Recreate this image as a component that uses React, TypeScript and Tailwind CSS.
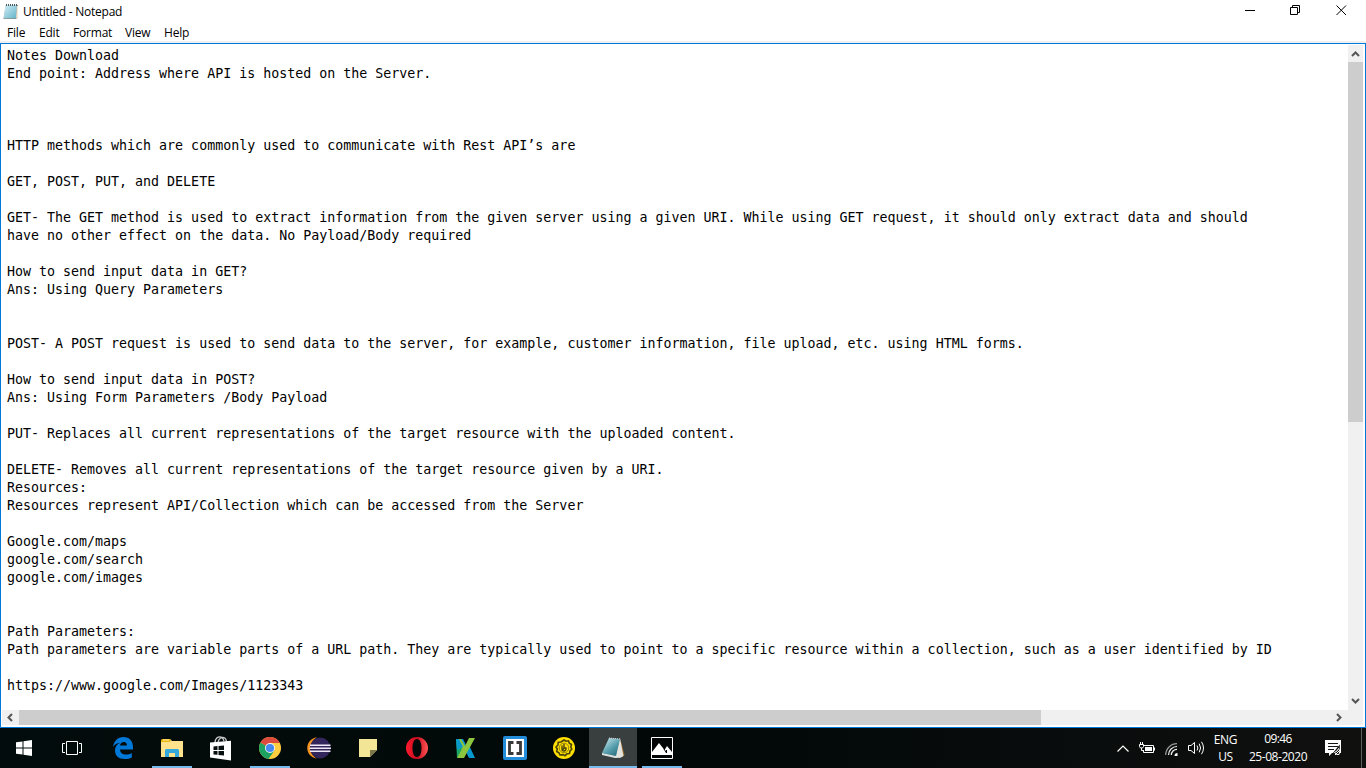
import React from "react";

const lines = [
  "Notes Download",
  "End point: Address where API is hosted on the Server.",
  "", "", "",
  "HTTP methods which are commonly used to communicate with Rest API’s are",
  "",
  "GET, POST, PUT, and DELETE",
  "",
  "GET- The GET method is used to extract information from the given server using a given URI. While using GET request, it should only extract data and should",
  "have no other effect on the data. No Payload/Body required",
  "",
  "How to send input data in GET?",
  "Ans: Using Query Parameters",
  "", "",
  "POST- A POST request is used to send data to the server, for example, customer information, file upload, etc. using HTML forms.",
  "",
  "How to send input data in POST?",
  "Ans: Using Form Parameters /Body Payload",
  "",
  "PUT- Replaces all current representations of the target resource with the uploaded content.",
  "",
  "DELETE- Removes all current representations of the target resource given by a URI.",
  "Resources:",
  "Resources represent API/Collection which can be accessed from the Server",
  "",
  "Google.com/maps",
  "google.com/search",
  "google.com/images",
  "", "",
  "Path Parameters:",
  "Path parameters are variable parts of a URL path. They are typically used to point to a specific resource within a collection, such as a user identified by ID",
  "",
  "https://www.google.com/Images/1123343",
];

const NotepadIcon = () => (
  <svg width="16" height="18" viewBox="0 0 16 18">
    <defs>
      <linearGradient id="pad" x1="0" y1="0" x2="1" y2="1">
        <stop offset="0" stopColor="#d3eff6" />
        <stop offset="1" stopColor="#62b2c8" />
      </linearGradient>
    </defs>
    <path d="M3 2H15V14L13 16H0.5Z" fill="#8b7a62" />
    <path d="M2.5 2H14L13 15.5H0.5Z" fill="url(#pad)" />
    <path d="M14 2.5L15 3V14L13 15.5Z" fill="#eee7d8" />
    <path d="M3 2H15" stroke="#4c5960" strokeWidth="2" strokeDasharray="1 1" />
  </svg>
);

const Chevron = ({ d }: { d: string }) => (
  <svg width="9" height="9" viewBox="0 0 9 9" fill="none" stroke="#555" strokeWidth="2"><path d={d} /></svg>
);

const StartIcon = () => (
  <svg width="16" height="16" viewBox="0 0 16 16" fill="#fff">
    <path d="M0 2.3L6.5 1.4V7.5H0ZM7.5 1.2L16 0V7.5H7.5ZM0 8.5H6.5V14.6L0 13.7ZM7.5 8.5H16V16L7.5 14.8Z" />
  </svg>
);
const TaskViewIcon = () => (
  <svg width="20" height="14" viewBox="0 0 20 14" fill="none" stroke="#fff">
    <path d="M4.5 .5H15.5V13.5H4.5ZM3 2.5H.5V11.5H3M17 2.5H19.5V11.5H17" />
  </svg>
);
const EdgeIcon = () => (
  <svg width="20" height="22" viewBox="0 0 20 22" fill="#0078d7">
    <path d="M0 9.8C1 4 4.8 0 10.3 0C16.4 0 20 4.2 20 9.8V12.5H7C7.2 16 9.8 17.6 13 17.6C15.3 17.6 17.2 17 18.8 16V20.4C16.8 21.5 14.4 22 11.8 22C5.6 22 2 18.5 2 13.5C2 9.9 4 7.2 7.2 5.8C4 6.1 1.6 7.6 0 9.8ZM7 8.6H14C14 6.2 12.8 5 10.7 5C8.7 5 7.4 6.4 7 8.6Z" />
  </svg>
);
const FolderIcon = () => (
  <svg width="22" height="19" viewBox="0 0 22 19">
    <path d="M0 1H1L2 0H9L11 2H22V18H0Z" fill="#ffe38c" />
    <path d="M0 1L1 0H9L10 2L8 3H0Z" fill="#e8b50e" />
    <path d="M2 1H8" stroke="#fff1ab" />
    <path d="M4 18V11L5 10H17L18 11V18H14V14H8V18Z" fill="#36a9dc" />
  </svg>
);
const StoreIcon = () => (
  <svg width="22" height="25" viewBox="0 0 22 25">
    <path d="M5 7C5 2 8 .8 10 .8C12 .8 13 2 14 5M8 6C9 2 12 .8 14 1.6C16 2.3 16.5 4 16.5 7" fill="none" stroke="#ccc" strokeWidth="1.3" />
    <path d="M0 6.5L21 4.8V24.5L0 21.5Z" fill="#fff" />
    <path d="M3.5 10.5L7.5 10.1V14H3.5ZM8.5 10L14 9.5V14H8.5ZM3.5 15H7.5V18.8L3.5 18.4ZM8.5 15H14V19.5L8.5 18.9Z" fill="#07100f" />
  </svg>
);
const ChromeIcon = () => (
  <svg width="22" height="22" viewBox="0 0 22 22">
    <circle cx="11" cy="11" r="11" fill="#ffcd40" />
    <path d="M11 11L1.5 5.5A11 11 0 0 0 9.5 21.9L15.5 13.5Z" fill="#1da261" />
    <path d="M11 11L1.5 5.5A11 11 0 0 1 20.8 6H11Z" fill="#dd4b3e" />
    <circle cx="11" cy="11" r="5" fill="#f4f4f4" />
    <circle cx="11" cy="11" r="4.1" fill="#4688f1" />
  </svg>
);
const EclipseIcon = () => (
  <svg width="24" height="22" viewBox="0 0 24 22">
    <path d="M10 .3C-3 2.5-3 19.5 10 21.7C1.5 17 1.5 5 10 .3Z" fill="#f7941e" />
    <circle cx="13.2" cy="11" r="10.4" fill="#33265d" />
    <path d="M3 8.2H23.5M2.5 11.2H24M3 14.2H23.5" stroke="#eee9f5" strokeWidth="1.6" />
  </svg>
);
const NoteIcon = () => (
  <svg width="18" height="18" viewBox="0 0 18 18">
    <path d="M0 0H18V11L11 18H0Z" fill="#f2e596" />
    <path d="M11 18V11H18Z" fill="#7b754a" />
  </svg>
);
const OperaIcon = () => (
  <svg width="22" height="22" viewBox="0 0 22 22">
    <defs><linearGradient id="opera" x2="1"><stop stopColor="#ff1b2d" /><stop offset=".5" stopColor="#c70b1e" /><stop offset="1" stopColor="#ff5655" /></linearGradient></defs>
    <path fillRule="evenodd" fill="url(#opera)" d="M11 0A11 11 0 1 0 11 22A11 11 0 1 0 11 0ZM11 2C14 2 15.5 6 15.5 11S14 20 11 20C8 20 6.5 16 6.5 11S8 2 11 2Z" />
  </svg>
);
const KatalonIcon = () => (
  <svg width="20" height="20" viewBox="0 0 20 20">
    <path d="M0 1H5L10 10L1 20Z" fill="#1aa765" />
    <path d="M0 1H7L10 7L7 11Z" fill="#0799ce" />
    <path d="M13 7L19 20H13L9 12Z" fill="#0799ce" />
    <path d="M13 0H19L8 20H1L6 11L2 1H5L9 8Z" fill="#8cc63f" />
    <path d="M0 1H3L7 9L1 12Z" fill="#0799ce" />
  </svg>
);
const BracketsIcon = () => (
  <svg width="24" height="24" viewBox="0 0 24 24">
    <rect width="24" height="24" rx="2" fill="#238dda" />
    <rect x="3" y="3" width="18" height="18" fill="#fff" />
    <path d="M10.5 6.5H6.5V17.5H10.5M13.5 6.5H17.5V17.5H13.5" fill="none" stroke="#393939" strokeWidth="2.8" />
  </svg>
);
const GearIcon = () => (
  <svg width="22" height="22" viewBox="0 0 22 22">
    <circle cx="11" cy="11" r="11" fill="#ffdf00" />
    <path d="M11 3L13 4.2L15.5 3.8L16.3 6.2L18.5 7.5L17.8 10L18.8 12.2L17 14L16.5 16.5L14 16.8L12 18.7L10 17.6L7 18L6 15.8L3.7 14.5L4.3 12L3 10L5 8L5.2 5.2L8 5Z" fill="none" stroke="#49420a" strokeWidth="1.6" />
    <circle cx="11" cy="11" r="4.8" fill="none" stroke="#776d0d" strokeWidth=".8" />
    <path d="M11 7V11M9 8.5V12Q9 14 11 14T13 11H11L9.5 13" fill="none" stroke="#49420a" strokeWidth="1.4" />
  </svg>
);
const BigNotepadIcon = () => (
  <svg width="23" height="22" viewBox="0 0 23 22">
    <defs><linearGradient id="notebook" x1="0" y1="0" x2=".8" y2="1"><stop stopColor="#d8f0f3" /><stop offset=".6" stopColor="#579fae" /><stop offset="1" stopColor="#286d7d" /></linearGradient></defs>
    <path d="M18 1L22.5 18L20 20Z" fill="#9c6b2c" />
    <path d="M18 1L21.5 19L18 21L13 20Z" fill="#e2e2df" />
    <path d="M7 1L18 2L14 19L0 16Z" fill="url(#notebook)" />
    <path d="M0 16L14 19L17 21L13 21L0 18Z" fill="#d7e1df" />
    <path d="M7 1L18 2" stroke="#ddd" strokeDasharray="1 1" />
  </svg>
);
const PhotosIcon = () => (
  <svg width="22" height="22" viewBox="0 0 22 22">
    <path d="M.5 .5H21.5V21.5H.5Z" fill="#020606" stroke="#fff" />
    <path d="M1 15L8 6L13.5 13L16 9L21 15V18H1Z" fill="#fff" />
    <path d="M13 12L15.5 16V13" fill="none" stroke="#020606" />
  </svg>
);

const tasks = [
  { Icon: StartIcon, c: "w-[48px]" },
  { Icon: TaskViewIcon, c: "w-[48px]" },
  { Icon: EdgeIcon, c: "w-[54px]" },
  { Icon: FolderIcon, c: "w-[44px]", open: true },
  { Icon: StoreIcon, c: "w-[53px]" },
  { Icon: ChromeIcon, c: "w-[45px]", open: true },
  { Icon: EclipseIcon, c: "w-[53px]" },
  { Icon: NoteIcon, c: "w-[46px]" },
  { Icon: OperaIcon, c: "w-[52px]" },
  { Icon: KatalonIcon, c: "w-[45px]" },
  { Icon: BracketsIcon, c: "w-[53px]" },
  { Icon: GearIcon, c: "w-[45px]" },
];

const ExpandIcon = () => (
  <svg width="12" height="7" viewBox="0 0 12 7" fill="none" stroke="#fff" strokeWidth="1.2"><path d="M.5 6.5L6 1L11.5 6.5" /></svg>
);
const BatteryIcon = () => (
  <svg width="16" height="13" viewBox="0 0 16 13" fill="none" stroke="#fff">
    <path d="M5 3.5H14.5V10.5H4.5V8M15.5 5.5V8.5M1.5 0V3M3.5 0V3M.5 2.5H4.5V4.5L3.5 6H1.5L.5 4.5ZM2.5 6V8.5H4" />
    <path d="M6 5H13V9H6Z" fill="#fff" stroke="none" />
  </svg>
);
const WifiIcon = () => (
  <svg width="13" height="13" viewBox="0 0 13 13" fill="none" strokeWidth="1.2">
    <path d="M.7 12A11.3 11.3 0 0 1 12 .7" stroke="#999" />
    <path d="M3.5 12A8.5 8.5 0 0 1 12 3.5M6.3 12A5.7 5.7 0 0 1 12 6.3" stroke="#eee" />
    <path d="M9.5 13A3 3 0 0 1 12.5 10V13Z" fill="#fff" />
  </svg>
);
const SpeakerIcon = () => (
  <svg width="17" height="14" viewBox="0 0 17 14" fill="none" stroke="#fff">
    <path d="M.5 4.5H3L6.5 1.5V12.5L3 9.5H.5ZM9 4.5Q10.8 7 9 9.5M11.2 2.7Q14 7 11.2 11.3M13.5 .8Q17.5 7 13.5 13.2" />
  </svg>
);
const ActionIcon = () => (
  <svg width="17" height="17" viewBox="0 0 17 17">
    <path d="M0 0H16V13H7L4 16V13H0Z" fill="#fff" />
    <path d="M3 3.5H13M3 6.5H13M3 9.5H9" stroke="#151513" />
    <path d="M9.5 13L13.5 8V14Z" fill="#151513" stroke="#151513" strokeWidth="2.5" />
    <path d="M9.5 12.5Q12.5 11.5 13.5 8.5Q16 11 14 14.5Q12 15.5 9.5 12.5M10 15L15 10" fill="none" stroke="#fff" />
  </svg>
);

export default function App() {
  return (
    <div className="flex h-[768px] w-[1366px] flex-col overflow-hidden bg-white font-['Open_Sans',sans-serif] text-[12px] text-black">
      <header className="flex h-[23px] shrink-0 items-center justify-between pl-[3px] pr-[19px]">
        <div className="flex items-center gap-[4px]">
          <NotepadIcon />
          <span className="text-[12px] tracking-[-0.24px]">Untitled - Notepad</span>
        </div>
        <svg className="mb-[3px]" width="102" height="12" viewBox="0 0 102 12" fill="none" stroke="#000">
          <path d="M0 6.5H10M45.5 3.5H52.5V10.5H45.5ZM47.5 3V1.5H54.5V8.5H53M91.5 1.5L101 11M101 1.5L91.5 11" />
        </svg>
      </header>
      <nav className="flex h-[18px] shrink-0 items-center pl-[7px] pt-[2px] tracking-[-0.2px]">
        <span className="w-[32px]">File</span>
        <span className="w-[34px]">Edit</span>
        <span className="w-[52px]">Format</span>
        <span className="w-[39px]">View</span>
        <span>Help</span>
      </nav>
      <div className="h-[2px] shrink-0 bg-[#f0f0f0]" />
      <main className="flex h-[685px] w-full shrink-0 flex-col border border-[#0078d7] pb-[2px] pl-[1px] pr-[2px] pt-[1px]">
        <div className="flex h-[665px] shrink-0">
          <div className="min-w-0 flex-1 overflow-hidden pl-[5px] pt-[2px] font-['DejaVu_Sans_Mono',monospace] text-[13.3px] leading-[18px]">
            {lines.map((line, i) => <div key={i} className="h-[18px] whitespace-pre">{line}</div>)}
          </div>
          <div className="flex w-[15px] shrink-0 flex-col items-center bg-[#f0f0f0]">
            <div className="flex h-[17px] items-center pt-[1px]"><Chevron d="M1 6L4.5 2.5L8 6" /></div>
            <div className="h-[360px] w-full bg-[#cdcdcd]" />
            <div className="flex-1" />
            <div className="flex h-[17px] items-center pb-[2px]"><Chevron d="M1 3L4.5 6.5L8 3" /></div>
          </div>
        </div>
        <div className="flex h-[15px] shrink-0 bg-[#f0f0f0]">
          <div className="flex w-[17px] items-center justify-center"><Chevron d="M6 1L2.5 4.5L6 8" /></div>
          <div className="h-full w-[1022px] bg-[#cdcdcd]" />
          <div className="flex-1" />
          <div className="mr-[16px] flex w-[17px] items-center justify-center"><Chevron d="M3 1L6.5 4.5L3 8" /></div>
        </div>
      </main>
      <footer className="flex h-[40px] shrink-0 bg-linear-to-r from-[#030c0c] via-[#020808] to-[#10100f] text-white">
        {tasks.map(({ Icon, c, open }, i) => (
          <div key={i} className={`flex shrink-0 flex-col items-center ${c}`}>
            <div className="flex h-[38px] items-center justify-center pt-[2px]"><Icon /></div>
            {open && <div className="h-[2px] w-[40px] bg-[#76b9ed]" />}
          </div>
        ))}
        <div className="ml-[3px] flex w-[48px] flex-col items-center border-b-2 border-[#76b9ed] bg-[#393f3f] pt-[9px]"><BigNotepadIcon /></div>
        <div className="ml-[5px] flex w-[40px] flex-col items-center border-b-2 border-[#76b9ed] pt-[9px]"><PhotosIcon /></div>
        <div className="flex-1" />
        <div className="flex items-center gap-[10px]">
          <ExpandIcon />
          <BatteryIcon />
          <div className="flex pt-[2px]"><WifiIcon /></div>
          <SpeakerIcon />
        </div>
        <div className="ml-[6px] flex w-[29px] flex-col items-center pt-[3px] leading-[17px]">
          <span className="tracking-[-0.3px]">ENG</span><span className="tracking-[-0.3px]">US</span>
        </div>
        <div className="ml-[3px] flex w-[70px] flex-col items-center pt-[2px] leading-[18px]">
          <span className="tracking-[-0.65px]">09:46</span><span className="tracking-[-0.45px]">25-08-2020</span>
        </div>
        <div className="ml-[12px] mr-[19px] flex pt-[12px]"><ActionIcon /></div>
        <div className="mr-[4px] h-full w-px bg-[#60605f]" />
      </footer>
    </div>
  );
}
